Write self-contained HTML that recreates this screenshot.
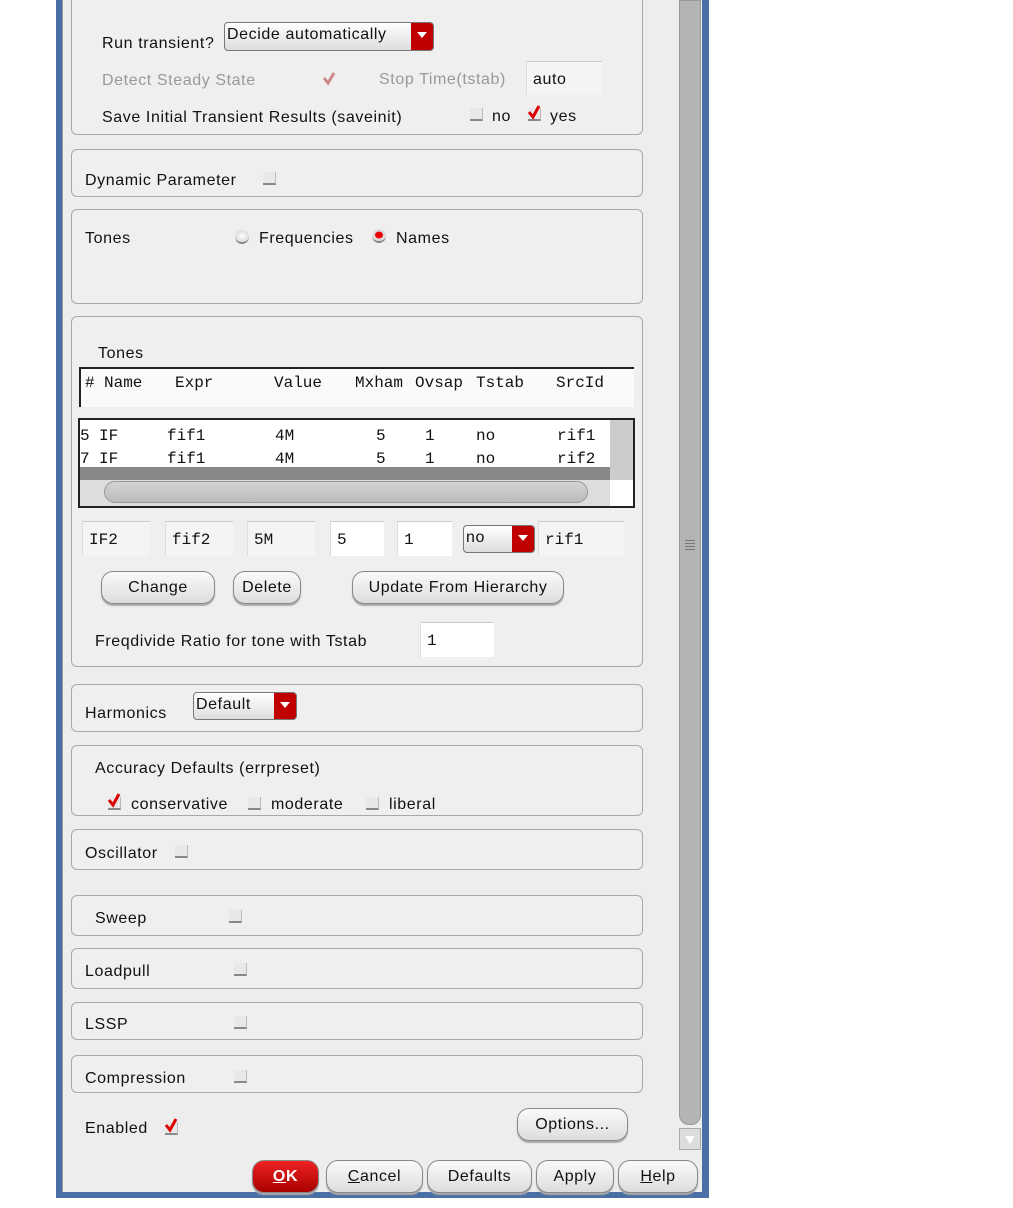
<!DOCTYPE html>
<html><head><meta charset="utf-8">
<style>
*{box-sizing:border-box;margin:0;padding:0}
body{width:1013px;height:1208px;background:#fff;position:relative;overflow:hidden;font-family:"Liberation Sans","DejaVu Sans",sans-serif;font-size:16px;letter-spacing:0.6px;color:#111}
.a{position:absolute;white-space:nowrap}
#win{position:absolute;left:56px;top:-10px;width:653px;height:1208px;background:#4a6fa5;}
#inner{position:absolute;left:62px;top:-10px;width:640px;height:1202px;background:#ededed;border-left:1px solid #999}
.g{position:absolute;left:71px;width:572px;border:1px solid #a8a8a8;border-radius:6px;background:#efefef}
.cb{position:absolute;width:13px;height:13px;border-bottom:2px solid #888;border-right:1px solid #bbb;background:#e8e8e8}
.dis{color:#999}
.btn{position:absolute;height:33px;border:1px solid #888;border-radius:12px;background:linear-gradient(#fafafa,#ddd);text-align:center;line-height:31px;font-size:16px;box-shadow:0 2px 1px #aaa}
.fld{position:absolute;height:35px;background:#f4f4f4;border-top:1px solid #ccc;border-left:1px solid #ddd;font-family:"Liberation Mono","DejaVu Sans Mono",monospace;font-size:16px;letter-spacing:0;padding:9px 0 0 6px}
.dd{position:absolute;height:28px;border:1px solid #777;border-radius:4px;background:linear-gradient(#fff,#ddd);font-size:16px;padding:3px 0 0 2px;overflow:hidden}
.dd i{position:absolute;right:0;top:0;width:22px;height:100%;background:#c00000}
.dd i:after{content:"";position:absolute;left:6px;top:9px;border-left:5px solid transparent;border-right:5px solid transparent;border-top:6px solid #fff}
.m{position:absolute;white-space:nowrap;font-family:"Liberation Mono","DejaVu Sans Mono",monospace;font-size:16px;letter-spacing:0}
</style></head><body>
<div id="win"></div>
<div id="inner"></div>
<div class="a" style="left:679px;top:0;width:22px;height:1125px;background:#b4b4b4;border-radius:0 0 10px 10px;border:1px solid #999"></div>
<div class="a" style="left:685px;top:540px;width:10px;height:10px;border-top:1px solid #777;border-bottom:1px solid #777;background:repeating-linear-gradient(#b4b4b4 0 2px,#777 2px 3px)"></div>
<div class="a" style="left:679px;top:1128px;width:22px;height:22px;background:#ddd;border:1px solid #aaa"><div style="position:absolute;left:5px;top:7px;border-left:5px solid transparent;border-right:5px solid transparent;border-top:8px solid #fff"></div></div>

<div class="g" style="top:-10px;height:145px"></div>
<div class="a" style="left:102px;top:35px">Run transient?</div>
<div class="dd" style="left:224px;top:22px;width:210px;height:29px">Decide automatically<i></i></div>
<div class="a dis" style="left:102px;top:72px">Detect Steady State</div>
<svg class="a" style="left:322px;top:70px" width="16" height="16"><path d="M2 8 L6 13 L12 3" stroke="#c88" stroke-width="3" fill="none"/></svg>
<div class="a dis" style="left:379px;top:71px">Stop Time(tstab)</div>
<div class="fld" style="left:526px;top:61px;width:76px;height:34px;font-family:'Liberation Sans',sans-serif;letter-spacing:0.6px">auto</div>
<div class="a" style="left:102px;top:109px">Save Initial Transient Results (saveinit)</div>
<div class="cb" style="left:470px;top:108px"></div>
<div class="a" style="left:492px;top:108px">no</div>
<div class="cb" style="left:528px;top:108px"></div>
<svg class="a" style="left:527px;top:104px" width="16" height="16"><path d="M2 8 L6 13 L12 2" stroke="#d00" stroke-width="3" fill="none"/></svg>
<div class="a" style="left:550px;top:108px">yes</div>

<div class="g" style="top:149px;height:48px"></div>
<div class="a" style="left:85px;top:172px">Dynamic Parameter</div>
<div class="cb" style="left:263px;top:172px"></div>

<div class="g" style="top:209px;height:95px"></div>
<div class="a" style="left:85px;top:230px">Tones</div>
<div class="a" style="left:235px;top:230px;width:14px;height:14px;border-radius:50%;background:radial-gradient(#fff,#ccc);border-bottom:2px solid #888"></div>
<div class="a" style="left:259px;top:230px">Frequencies</div>
<div class="a" style="left:372px;top:229px;width:14px;height:14px;border-radius:50%;background:radial-gradient(#e00 35%,#ddd 45%);border-bottom:2px solid #888"></div>
<div class="a" style="left:396px;top:230px">Names</div>

<div class="g" style="top:316px;height:351px"></div>
<div class="a" style="left:98px;top:345px">Tones</div>
<div class="a" style="left:79px;top:367px;width:555px;height:40px;background:#fafafa;border-top:2px solid #222;border-left:2px solid #222"></div>
<div class="m" style="left:85px;top:374px">#</div>
<div class="m" style="left:104px;top:374px">Name</div>
<div class="m" style="left:175px;top:374px">Expr</div>
<div class="m" style="left:274px;top:374px">Value</div>
<div class="m" style="left:355px;top:374px">Mxham</div>
<div class="m" style="left:415px;top:374px">Ovsap</div>
<div class="m" style="left:476px;top:374px">Tstab</div>
<div class="m" style="left:556px;top:374px">SrcId</div>
<div class="a" style="left:78px;top:418px;width:557px;height:90px;background:#fff;border:2px solid #222;overflow:hidden">
 <div class="a" style="left:0;top:47px;width:530px;height:20px;background:#888"></div>
 <div class="m" style="left:0;top:5px;line-height:23px">5<br>7</div>
 <div class="m" style="left:19px;top:5px;line-height:23px">IF<br>IF</div>
 <div class="m" style="left:87px;top:5px;line-height:23px">fif1<br>fif1</div>
 <div class="m" style="left:195px;top:5px;line-height:23px">4M<br>4M</div>
 <div class="m" style="left:296px;top:5px;line-height:23px">5<br>5</div>
 <div class="m" style="left:345px;top:5px;line-height:23px">1<br>1</div>
 <div class="m" style="left:396px;top:5px;line-height:23px">no<br>no</div>
 <div class="m" style="left:477px;top:5px;line-height:23px">rif1<br>rif2</div>
 <div class="a" style="left:530px;top:0;width:23px;height:60px;background:#ccc"></div>
 <div class="a" style="left:0;top:60px;width:530px;height:26px;background:#ddd"></div>
 <div class="a" style="left:24px;top:61px;width:484px;height:22px;border-radius:11px;background:linear-gradient(#d4d4d4,#bbb);border:1px solid #999"></div>
</div>

<div class="fld" style="left:82px;top:521px;width:68px">IF2</div>
<div class="fld" style="left:165px;top:521px;width:68px">fif2</div>
<div class="fld" style="left:247px;top:521px;width:68px">5M</div>
<div class="fld" style="left:330px;top:521px;width:54px;background:#fff">5</div>
<div class="fld" style="left:397px;top:521px;width:55px;background:#fff">1</div>
<div class="dd" style="left:463px;top:525px;width:72px">no<i></i></div>
<div class="fld" style="left:538px;top:521px;width:86px">rif1</div>

<div class="btn" style="left:101px;top:571px;width:114px">Change</div>
<div class="btn" style="left:233px;top:571px;width:68px">Delete</div>
<div class="btn" style="left:352px;top:571px;width:212px">Update From Hierarchy</div>
<div class="a" style="left:95px;top:633px">Freqdivide Ratio for tone with Tstab</div>
<div class="fld" style="left:420px;top:622px;width:74px;background:#fff">1</div>

<div class="g" style="top:684px;height:48px"></div>
<div class="a" style="left:85px;top:705px">Harmonics</div>
<div class="dd" style="left:193px;top:692px;width:104px">Default<i></i></div>

<div class="g" style="top:745px;height:71px"></div>
<div class="a" style="left:95px;top:760px">Accuracy Defaults (errpreset)</div>
<div class="cb" style="left:108px;top:797px"></div>
<svg class="a" style="left:107px;top:792px" width="16" height="16"><path d="M2 8 L6 13 L12 2" stroke="#d00" stroke-width="3" fill="none"/></svg>
<div class="a" style="left:131px;top:796px">conservative</div>
<div class="cb" style="left:248px;top:797px"></div>
<div class="a" style="left:271px;top:796px">moderate</div>
<div class="cb" style="left:366px;top:797px"></div>
<div class="a" style="left:389px;top:796px">liberal</div>

<div class="g" style="top:829px;height:41px"></div>
<div class="a" style="left:85px;top:845px">Oscillator</div>
<div class="cb" style="left:175px;top:845px"></div>

<div class="g" style="top:895px;height:41px"></div>
<div class="a" style="left:95px;top:910px">Sweep</div>
<div class="cb" style="left:229px;top:910px"></div>
<div class="g" style="top:948px;height:41px"></div>
<div class="a" style="left:85px;top:963px">Loadpull</div>
<div class="cb" style="left:234px;top:963px"></div>
<div class="g" style="top:1002px;height:38px"></div>
<div class="a" style="left:85px;top:1016px">LSSP</div>
<div class="cb" style="left:234px;top:1016px"></div>
<div class="g" style="top:1055px;height:38px"></div>
<div class="a" style="left:85px;top:1070px">Compression</div>
<div class="cb" style="left:234px;top:1070px"></div>

<div class="a" style="left:85px;top:1120px">Enabled</div>
<div class="cb" style="left:165px;top:1122px"></div>
<svg class="a" style="left:164px;top:1117px" width="16" height="16"><path d="M2 8 L6 13 L12 2" stroke="#d00" stroke-width="3" fill="none"/></svg>
<div class="btn" style="left:517px;top:1108px;width:111px">Options...</div>

<div class="btn" style="left:252px;top:1160px;width:67px;background:linear-gradient(#e22,#a00);color:#fff;font-weight:bold"><u>O</u>K</div>
<div class="btn" style="left:326px;top:1160px;width:97px"><u>C</u>ancel</div>
<div class="btn" style="left:427px;top:1160px;width:105px">Defaults</div>
<div class="btn" style="left:536px;top:1160px;width:78px">Apply</div>
<div class="btn" style="left:618px;top:1160px;width:80px"><u>H</u>elp</div>
</body></html>
